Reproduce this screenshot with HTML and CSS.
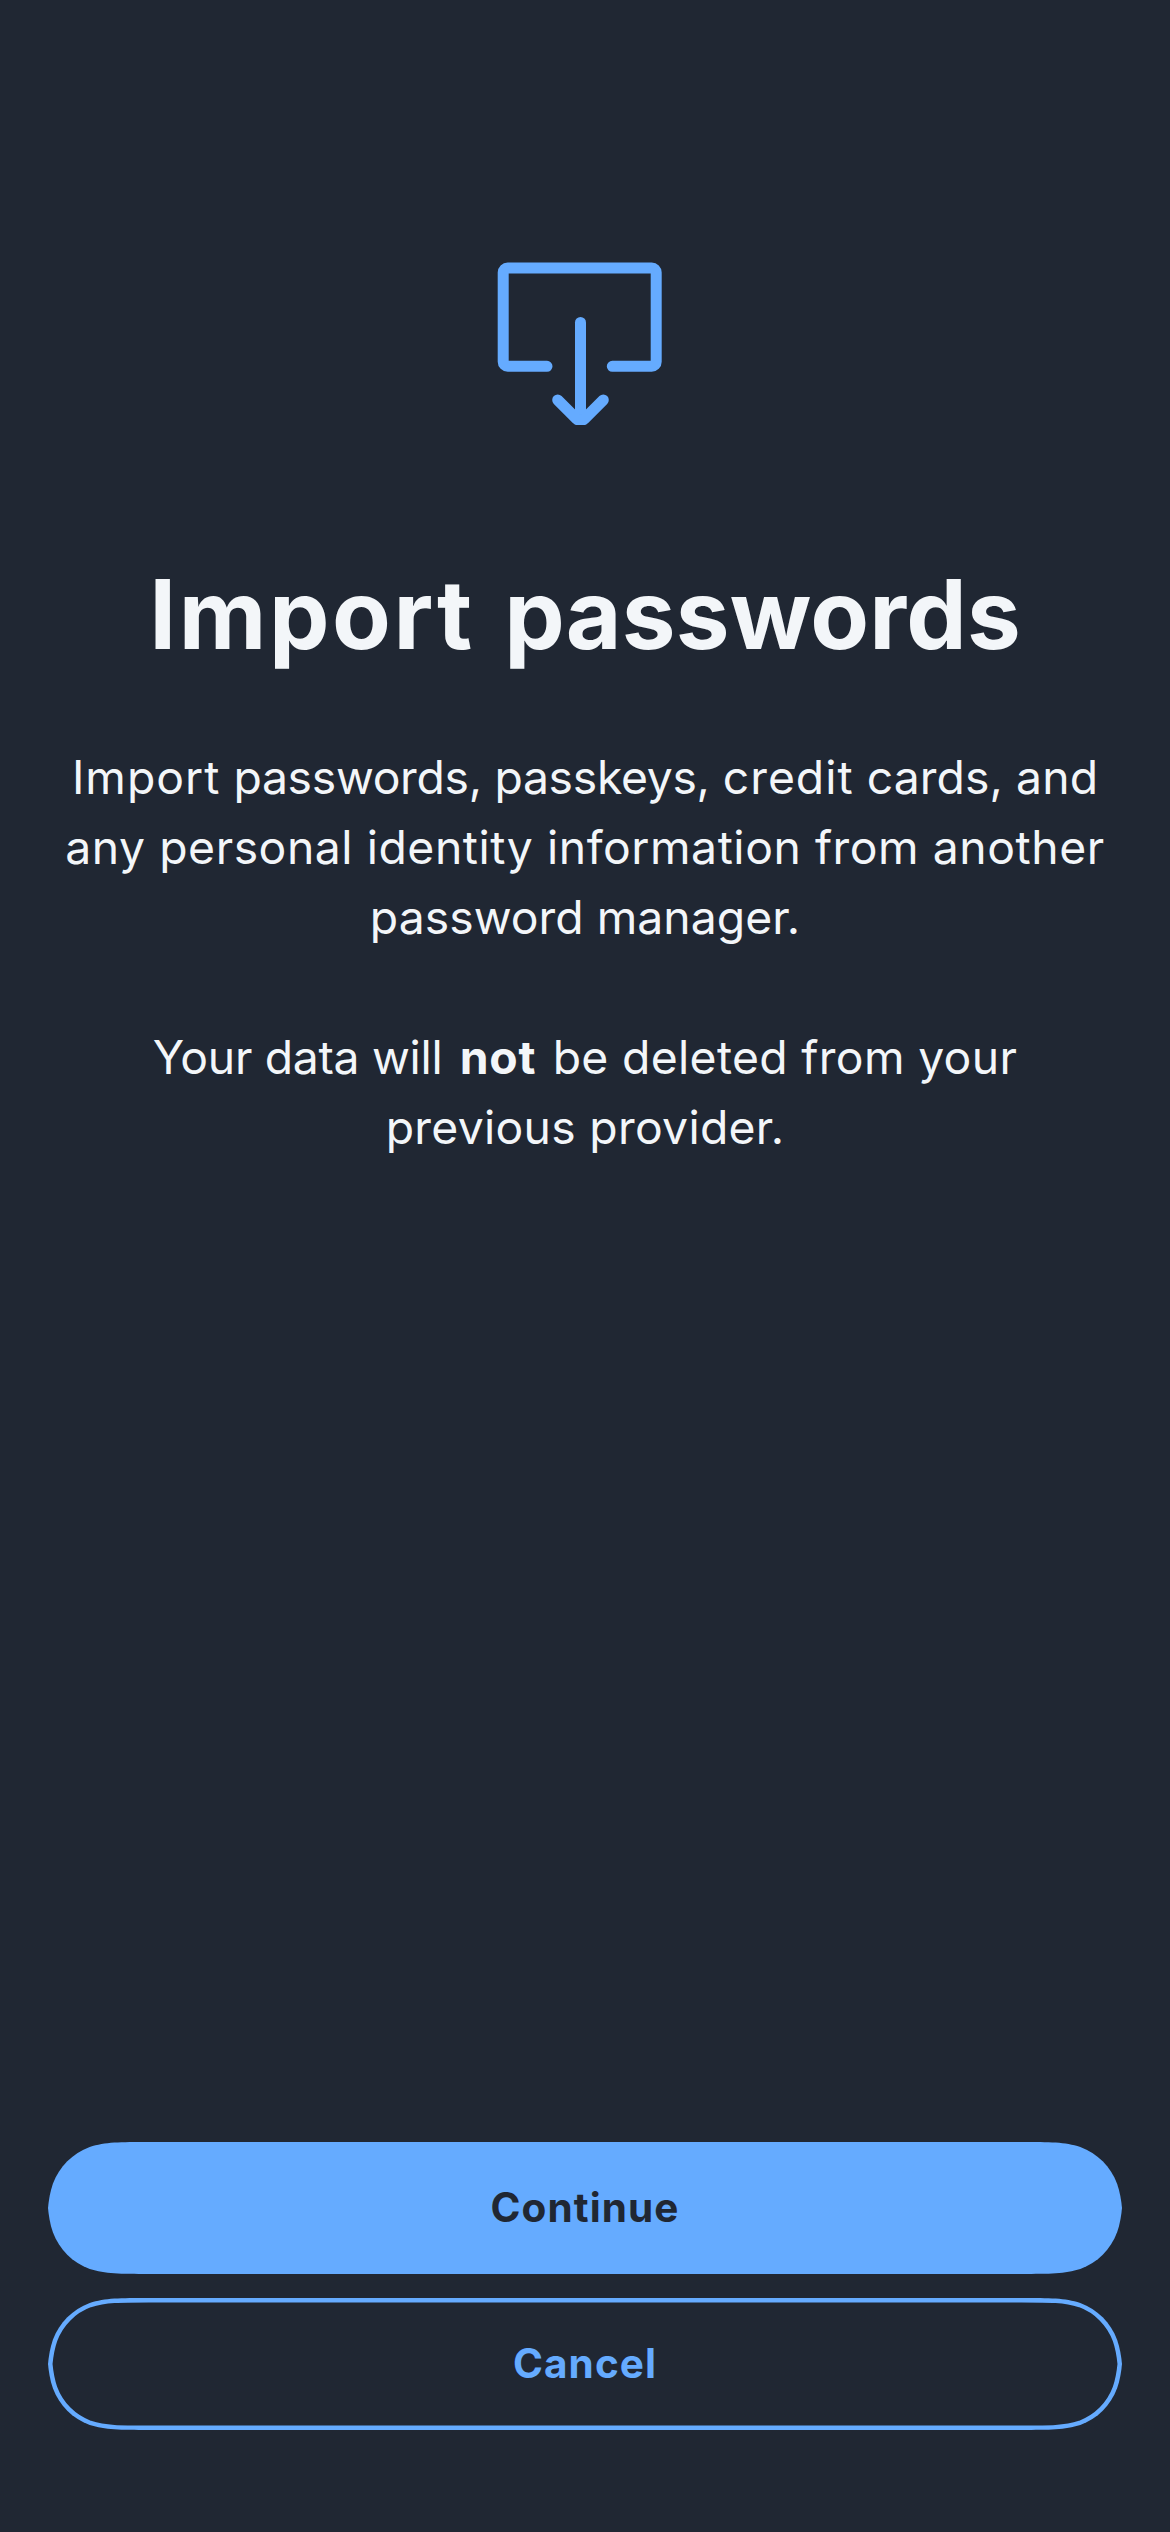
FILE: index.html
```html
<!DOCTYPE html>
<html lang="en">
<head>
  <meta charset="utf-8">
  <title>Import passwords</title>
  <link rel="stylesheet" href="styles.css">
</head>
<body>
  <main class="screen">
    <svg class="hero-icon" viewBox="490 245 180 180" fill="none" stroke="currentColor" stroke-width="11" stroke-linecap="round" stroke-linejoin="round" aria-hidden="true">
      <path d="M547 366.3H507.7A4.5 4.5 0 0 1 503.2 361.8V272.5A4.5 4.5 0 0 1 507.7 268H651.7A4.5 4.5 0 0 1 656.2 272.5V361.8A4.5 4.5 0 0 1 651.7 366.3H612.3"/>
      <path d="M580.5 322.5V419"/>
      <path d="M557.7 400L576.7 419Q578.2 420.4 580.5 420.4Q582.8 420.4 584.3 419L603.3 400"/>
    </svg>
    <h1 class="title">Import <span class="title-end">passwords</span></h1>
    <div class="message">
      <p class="paragraph">
        <span class="line line-a"><span class="loose">Import</span> <span class="tight">passwords, passkeys,</span> <span class="loose">credit</span> cards, and</span>
        <span class="line line-b">any personal identity information from another</span>
        <span class="line line-c">password manager.</span>
      </p>
      <p class="paragraph">
        <span class="line line-d"><span class="tight">Your data will</span> <strong>not</strong> be deleted from your</span>
        <span class="line line-e">previous provider.</span>
      </p>
    </div>
    <div class="actions">
      <button class="button button-primary" type="button">
        <svg class="button-shape" viewBox="0 0 1074 132" aria-hidden="true">
          <path fill="currentColor" d="M0 66C.8 58 2 50 4.9 41.7C11.2 24.6 24.6 11.2 41.7 4.9C57.3 0 71.8 0 101 0H973C1002.2 0 1016.7 0 1032.3 4.9C1049.4 11.2 1062.8 24.6 1069.1 41.7C1072 50 1073.2 58 1074 66C1073.2 74 1072 82 1069.1 90.3C1062.8 107.4 1049.4 120.8 1032.3 127.1C1016.7 132 1002.2 132 973 132H101C71.8 132 57.3 132 41.7 127.1C24.6 120.8 11.2 107.4 4.9 90.3C2 82 .8 74 0 66Z"/>
        </svg>
        <span class="button-label">Continue</span>
      </button>
      <button class="button button-outline" type="button">
        <svg class="button-shape" viewBox="0 0 1074 132" aria-hidden="true">
          <clipPath id="pill">
            <path id="pill-path" d="M0 66C.8 58 2 50 4.9 41.7C11.2 24.6 24.6 11.2 41.7 4.9C57.3 0 71.8 0 101 0H973C1002.2 0 1016.7 0 1032.3 4.9C1049.4 11.2 1062.8 24.6 1069.1 41.7C1072 50 1073.2 58 1074 66C1073.2 74 1072 82 1069.1 90.3C1062.8 107.4 1049.4 120.8 1032.3 127.1C1016.7 132 1002.2 132 973 132H101C71.8 132 57.3 132 41.7 127.1C24.6 120.8 11.2 107.4 4.9 90.3C2 82 .8 74 0 66Z"/>
          </clipPath>
          <use href="#pill-path" fill="none" stroke="currentColor" stroke-width="9" clip-path="url(#pill)"/>
        </svg>
        <span class="button-label">Cancel</span>
      </button>
    </div>
  </main>
</body>
</html>
```
FILE: styles.css
```css
* {
  box-sizing: border-box;
}

body {
  margin: 0;
  background: #202733;
  color: #f3f6f9;
  font-family: Inter, "Liberation Sans", sans-serif;
}

.screen {
  display: flex;
  flex-direction: column;
  align-items: center;
  height: 2532px;
  padding: 245px 48px 102px;
}

.hero-icon {
  flex: none;
  width: 180px;
  height: 180px;
  margin-right: 10px;
  color: #65abff;
}

.title {
  margin: 129px 0 0;
  font-size: 96px;
  font-weight: 700;
  line-height: 120px;
  letter-spacing: 2.6px;
  word-spacing: 4px;
  white-space: nowrap;
}

.title-end {
  letter-spacing: 0.2px;
}

.message {
  display: flex;
  flex-direction: column;
  gap: 70px;
  margin-top: 68px;
  font-size: 46.3px;
  line-height: 70px;
  text-align: center;
  white-space: nowrap;
}

.paragraph {
  margin: 0;
}

.paragraph strong {
  margin: 0 3px 0 4px;
  font-weight: 700;
  letter-spacing: 0.8px;
}

.line {
  display: block;
}

.line-a {
  letter-spacing: 0.1px;
}

.line-b {
  letter-spacing: 0.55px;
}

.line-c {
  letter-spacing: 0.04px;
}

.line-d {
  letter-spacing: 0.34px;
}

.line-e {
  letter-spacing: 0.3px;
}

.tight {
  letter-spacing: -0.3px;
}

.loose {
  letter-spacing: 1px;
}

.actions {
  display: flex;
  flex-direction: column;
  align-self: stretch;
  gap: 24px;
  margin-top: auto;
}

.button {
  position: relative;
  display: flex;
  align-items: center;
  justify-content: center;
  height: 132px;
  padding: 0;
  border: 0;
  background: none;
  color: #65abff;
  font: 650 40.5px/60px Inter, "Liberation Sans", sans-serif;
  letter-spacing: 1.1px;
}

.button-shape {
  position: absolute;
  inset: 0;
  width: 100%;
  height: 100%;
}

.button-label {
  position: relative;
}

.button-primary .button-label {
  color: #202733;
}
```
